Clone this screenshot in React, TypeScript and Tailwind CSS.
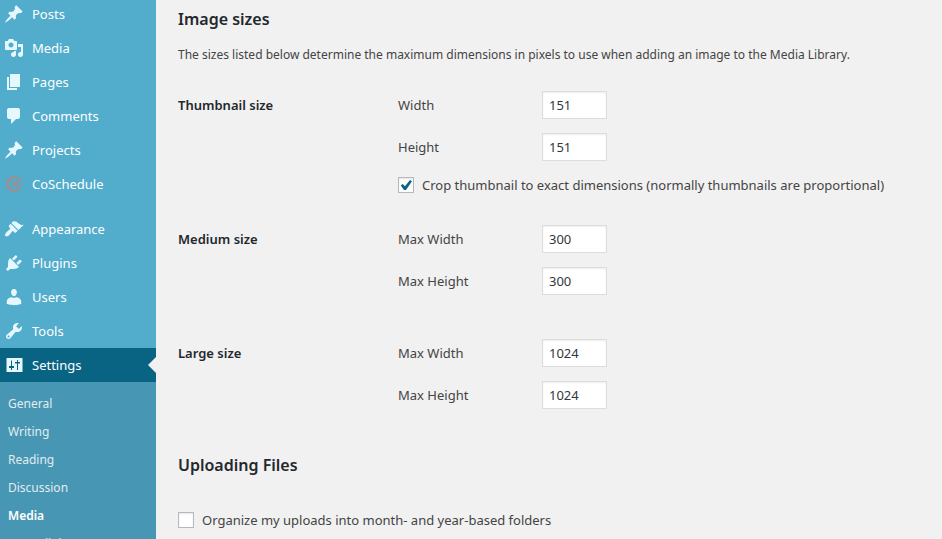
import type { ReactNode } from "react";

const pin =
  "M10.44 3.02l1.82-1.82 6.36 6.35-1.83 1.82c-1.05-.68-2.48-.57-3.41.36l-.75.75c-.92.93-1.04 2.35-.35 3.41l-1.83 1.82-2.41-2.41-2.8 2.79c-.42.42-3.38 2.71-3.8 2.29s1.86-3.39 2.28-3.81l2.79-2.79L4.1 9.36l1.83-1.82c1.05.69 2.48.57 3.4-.36l.75-.75c.93-.92 1.05-2.35.36-3.41z";

const contentItems = [
  { label: "Posts", icon: <Glyph d={pin} /> },
  {
    label: "Media",
    icon: (
      <Glyph d="M13 11V4c0-.55-.45-1-1-1h-1.67L9 1H5L3.67 3H2c-.55 0-1 .45-1 1v7c0 .55.45 1 1 1h10c.55 0 1-.45 1-1zM7 4.5c1.38 0 2.5 1.12 2.5 2.5S8.38 9.5 7 9.5 4.5 8.38 4.5 7 5.62 4.5 7 4.5zM14 6h5v10.5c0 1.38-1.12 2.5-2.5 2.5S14 17.88 14 16.5s1.12-2.5 2.5-2.5c.17 0 .34.02.5.05V9h-3V6zm-4 8.05V13h2v3.5c0 1.38-1.12 2.5-2.5 2.5S7 17.88 7 16.5 8.12 14 9.5 14c.17 0 .34.02.5.05z" />
    ),
  },
  { label: "Pages", icon: <Glyph d="M6 15V2h10v13H6zm-1 1h8v2H3V5h2v11z" /> },
  {
    label: "Comments",
    icon: (
      <Glyph d="M5 2h9c1.1 0 2 .9 2 2v7c0 1.1-.9 2-2 2h-2l-5 5v-5H5c-1.1 0-2-.9-2-2V4c0-1.1.9-2 2-2z" />
    ),
  },
  { label: "Projects", icon: <Glyph d={pin} /> },
  { label: "CoSchedule", icon: <CoScheduleLogo /> },
];

const adminItems = [
  {
    label: "Appearance",
    icon: (
      <Glyph d="M14.48 11.06L7.41 3.99l1.5-1.5c.5-.56 2.3-.47 3.51.32 1.21.8 1.43 1.28 2.91 2.1 1.18.64 2.45 1.26 4.45.85zm-.71.71L6.7 4.7 4.93 6.47c-.39.39-.39 1.02 0 1.41l1.06 1.06c.39.39.39 1.03 0 1.42-.6.6-1.43 1.11-2.21 1.69-.35.26-.7.53-1.01.84C1.43 14.23.4 16.08 1.4 17.07c.99 1 2.84-.03 4.18-1.36.31-.31.58-.66.85-1.02.57-.78 1.08-1.61 1.69-2.21.39-.39 1.02-.39 1.41 0l1.06 1.06c.39.39 1.02.39 1.41 0z" />
    ),
  },
  {
    label: "Plugins",
    icon: (
      <Glyph d="M13.11 4.36L9.87 7.6 8 5.73l3.24-3.24c.35-.34 1.05-.2 1.56.32.52.51.66 1.21.31 1.55zm-8 1.77l.91-1.12 9.01 9.01-1.19.84c-.71.71-2.63 1.16-3.82 1.16H6.14L4.9 17.26c-.59.59-1.54.59-2.12 0-.59-.58-.59-1.53 0-2.12l1.24-1.24v-3.88c0-1.13.4-3.19 1.09-3.89zm7.26 3.97l3.24-3.24c.34-.35 1.04-.21 1.55.31.52.51.66 1.21.31 1.55l-3.24 3.25z" />
    ),
  },
  {
    label: "Users",
    icon: (
      <Glyph d="M10 9.25c-2.27 0-2.9-3.44-2.9-3.44C6.9 4.02 7.82 2 9.97 2c2.16 0 3.1 2.02 2.9 3.81 0 0-.6 3.44-2.87 3.44zm-2.500 1l2.500.85 2.500-.85c2.900.3 4.740 2.080 4.740 4.280v2.490s-3.650 1.130-7.240 1.130c-3.650 0-7.240-1.130-7.240-1.130v-2.490c0-2.250 1.840-3.980 4.740-4.280z" />
    ),
  },
  {
    label: "Tools",
    icon: (
      <Glyph d="M16.68 9.77c-1.34 1.34-3.3 1.67-4.95.99l-5.41 6.52c-.99.99-2.59.99-3.58 0s-.99-2.59 0-3.57l6.52-5.42c-.68-1.65-.35-3.61.99-4.95 1.28-1.28 3.12-1.62 4.72-1.06l-2.89 2.89 2.82 2.82 2.86-2.87c.53 1.58.18 3.39-1.08 4.65zM3.81 16.21c.4.39 1.04.39 1.43 0 .4-.4.4-1.04 0-1.43-.39-.4-1.03-.4-1.43 0-.39.39-.39 1.03 0 1.43z" />
    ),
  },
  {
    label: "Settings",
    active: true,
    icon: (
      <Glyph d="M3 3h15a.5.5 0 0 1 .5.5v13a.5.5 0 0 1-.5.5H3a.5.5 0 0 1-.5-.5v-13A.5.5 0 0 1 3 3zM7 5.500V11H5v2h2v2h1v-2h2v-2H8V5.500zM13 5v2h-2v1.500h2V15h1V8.500h2V7h-2V5z" />
    ),
  },
];

const settingsPages = [
  { label: "General" },
  { label: "Writing" },
  { label: "Reading" },
  { label: "Discussion" },
  { label: "Media", active: true },
  { label: "Permalinks" },
];

export default function App() {
  return (
    <div className="flex h-screen overflow-hidden bg-[#f1f1f1] font-['Noto_Sans','Open_Sans',sans-serif] text-[13px] text-[#444]">
      <AdminSidebar />
      <MediaSettings />
    </div>
  );
}

function AdminSidebar() {
  return (
    <aside className="w-[156px] shrink-0 bg-[#52accc]">
      <nav className="-mt-[3px]">
        <ul>
          {contentItems.map((item) => (
            <NavItem key={item.label} {...item} />
          ))}
        </ul>
        <ul className="mt-[11px]">
          {adminItems.map((item) => (
            <NavItem key={item.label} {...item} />
          ))}
        </ul>
        <ul className="bg-[#4796b3] py-2 text-xs leading-7">
          {settingsPages.map((page) => (
            <li key={page.label}>
              <a
                href="#"
                className={`block px-2 ${
                  page.active ? "font-semibold text-white" : "text-[#e2ecf1]"
                }`}
              >
                {page.label}
              </a>
            </li>
          ))}
        </ul>
      </nav>
    </aside>
  );
}

function NavItem({ label, icon, active }: { label: string; icon: ReactNode; active?: boolean }) {
  return (
    <li>
      <a
        href="#"
        className={`relative flex h-[34px] items-center gap-2 pl-1 leading-[34px] text-white ${
          active ? "bg-[#096484]" : ""
        }`}
      >
        {icon}
        {label}
        {active && (
          <span className="absolute top-1/2 right-0 -translate-y-1/2 border-8 border-transparent border-r-[#f1f1f1]" />
        )}
      </a>
    </li>
  );
}

function Glyph({ d }: { d: string }) {
  return (
    <svg viewBox="0 0 20 20" className="size-5 shrink-0 fill-[#e5f8ff]" aria-hidden="true">
      <path fillRule="evenodd" d={d} />
    </svg>
  );
}

function CoScheduleLogo() {
  return (
    <svg
      viewBox="0 0 20 20"
      className="size-5 shrink-0 fill-none stroke-[#9c8f91]"
      strokeWidth="2.600"
      aria-hidden="true"
    >
      <path d="M12.800 3.900A6.700 6.700 0 1 0 16.600 10.800" />
      <path d="M7.500 8.600l2.900 2.900 6.900-7.300" />
    </svg>
  );
}

function MediaSettings() {
  return (
    <main className="min-w-0 flex-1 px-[22px]">
      <h2 className="pt-[7px] text-base leading-6 font-semibold text-[#23282d]">Image sizes</h2>
      <p className="mt-[14px] text-xs leading-5">
        The sizes listed below determine the maximum dimensions in pixels to use when adding an
        image to the Media Library.
      </p>

      <div className="mt-[26px] space-y-[30px]">
        <SizeGroup title="Thumbnail size">
          <SizeField id="thumbnail_w" label="Width" value={151} />
          <SizeField id="thumbnail_h" label="Height" value={151} />
          <Checkbox
            id="thumbnail_crop"
            label="Crop thumbnail to exact dimensions (normally thumbnails are proportional)"
            checked
          />
        </SizeGroup>
        <SizeGroup title="Medium size">
          <SizeField id="medium_w" label="Max Width" value={300} />
          <SizeField id="medium_h" label="Max Height" value={300} />
        </SizeGroup>
        <SizeGroup title="Large size">
          <SizeField id="large_w" label="Max Width" value={1024} />
          <SizeField id="large_h" label="Max Height" value={1024} />
        </SizeGroup>
      </div>

      <h2 className="mt-[30px] mb-[33px] text-base leading-6 font-semibold text-[#23282d]">
        Uploading Files
      </h2>
      <Checkbox
        id="uploads_folders"
        label="Organize my uploads into month- and year-based folders"
      />
    </main>
  );
}

function SizeGroup({ title, children }: { title: string; children: ReactNode }) {
  return (
    <fieldset className="flex min-h-[84px]">
      <legend className="float-left w-[220px] shrink-0 leading-7 font-semibold text-[#23282d]">
        {title}
      </legend>
      <div className="min-w-0 flex-1 space-y-[14px]">{children}</div>
    </fieldset>
  );
}

function SizeField({ id, label, value }: { id: string; label: string; value: number }) {
  return (
    <div className="flex h-7 items-center">
      <label htmlFor={id} className="w-36 leading-7">
        {label}
      </label>
      <input
        id={id}
        type="text"
        inputMode="numeric"
        defaultValue={value}
        className="h-7 w-[65px] border border-[#ddd] bg-white px-1.5 text-[#32373c] shadow-[inset_0_1px_2px_rgba(0,0,0,0.07)]"
      />
    </div>
  );
}

function Checkbox({ id, label, checked }: { id: string; label: string; checked?: boolean }) {
  return (
    <div className="flex h-5 items-center gap-2">
      <span className="relative size-4 shrink-0">
        <input
          id={id}
          type="checkbox"
          defaultChecked={checked}
          className="peer block size-4 appearance-none border border-[#b4b9be] bg-white shadow-[inset_0_1px_2px_rgba(0,0,0,0.1)]"
        />
        <svg
          viewBox="0 0 16 16"
          className="pointer-events-none absolute inset-0 hidden size-4 fill-[#096484] peer-checked:block"
          aria-hidden="true"
        >
          <path d="M12 3l2 1.300-6 8.700H6L2.800 8.500l1.800-1.600L7 9.300z" />
        </svg>
      </span>
      <label htmlFor={id} className="leading-5">
        {label}
      </label>
    </div>
  );
}
